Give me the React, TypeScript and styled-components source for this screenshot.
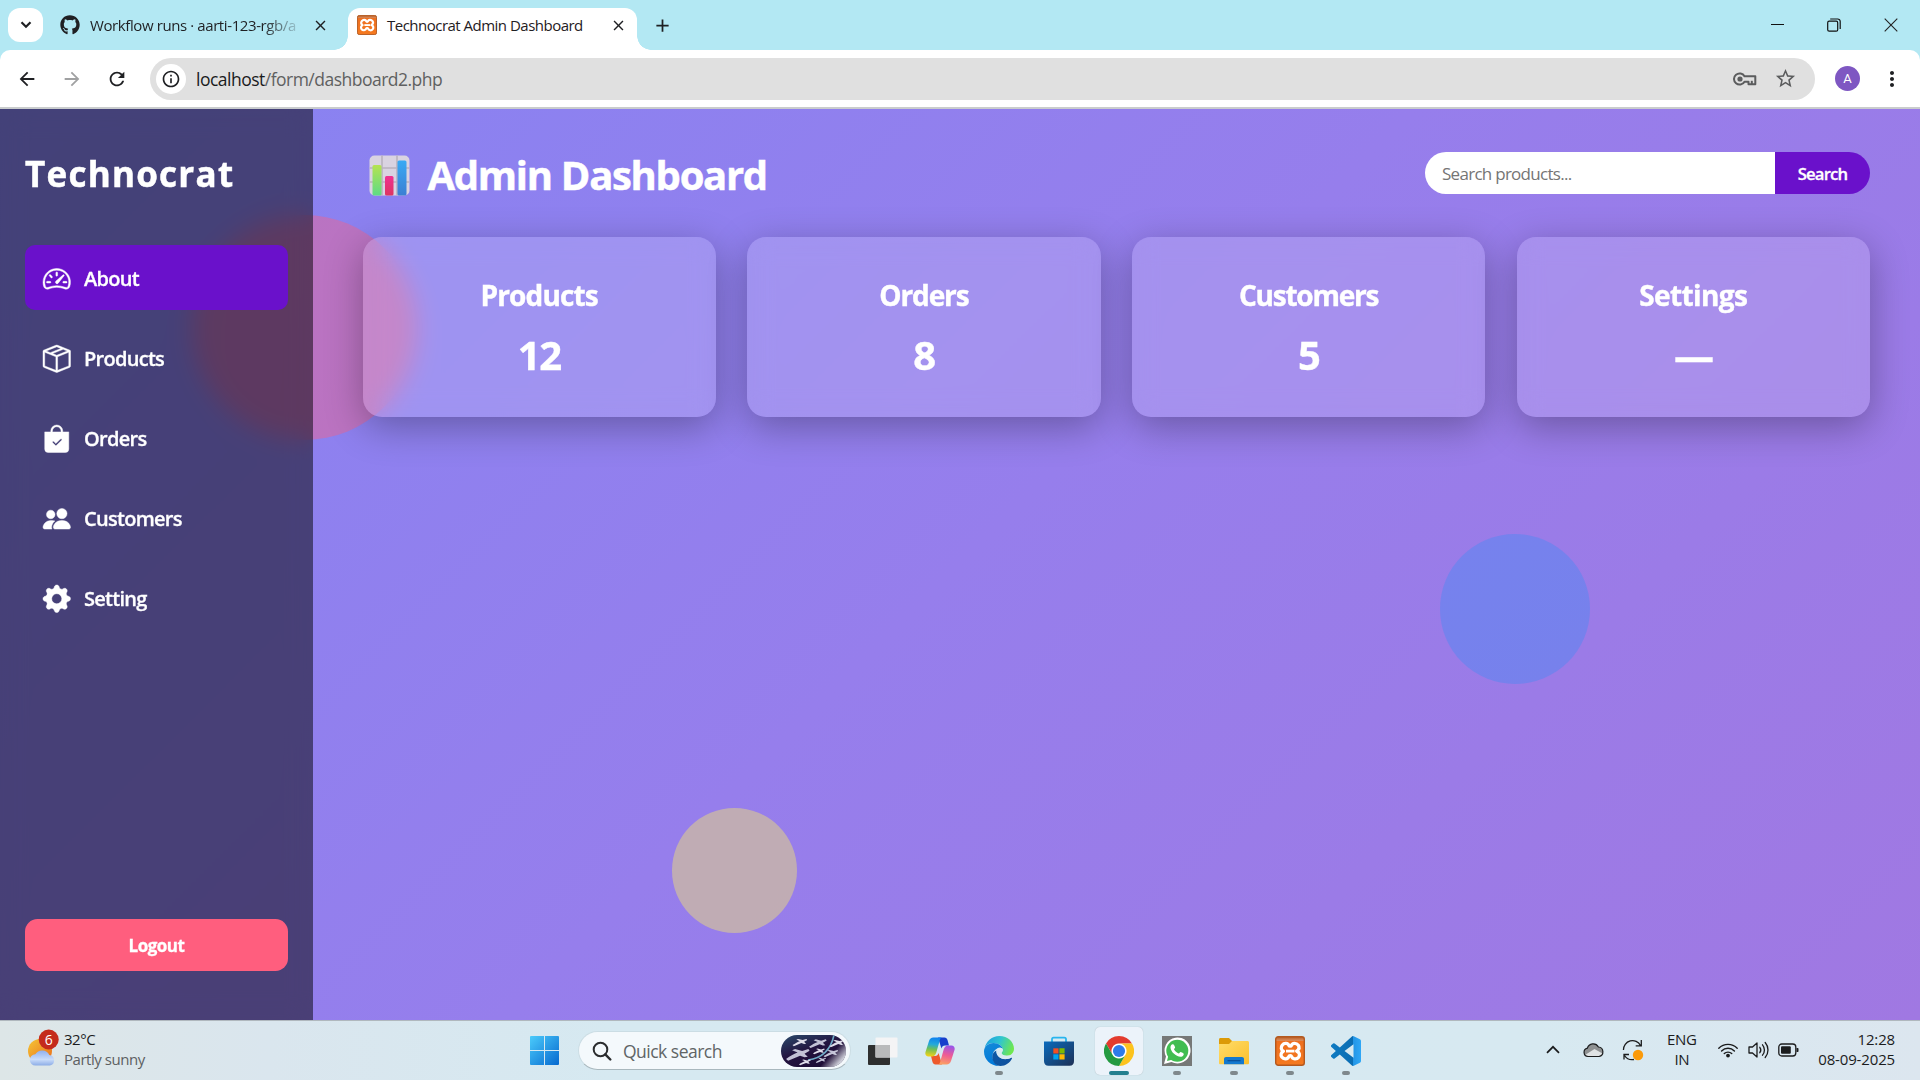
import React from 'react';
import styled, { createGlobalStyle } from 'styled-components';
import { BsSpeedometer2, BsBoxSeam, BsBagCheckFill, BsPeopleFill, BsGearFill } from 'react-icons/bs';
import { FaGithub } from 'react-icons/fa';
import {
  MdArrowBack,
  MdArrowForward,
  MdRefresh,
  MdInfoOutline,
  MdStarOutline,
  MdMoreVert,
  MdClose,
  MdAdd,
} from 'react-icons/md';

const GlobalStyle = createGlobalStyle`
  * { box-sizing: border-box; }
  html, body { margin: 0; padding: 0; overflow: hidden; }
  body { font-family: 'Open Sans', 'Noto Sans', sans-serif; }
  h1, h2, h3, p { margin: 0; }
  svg { display: block; flex-shrink: 0; }
`;

const Screen = styled.div`
  width: 1920px;
  height: 1080px;
  display: flex;
  flex-direction: column;
  overflow: hidden;
`;

/* ---------- Browser chrome ---------- */

const TabStrip = styled.div`
  height: 50px;
  flex-shrink: 0;
  background: #b3e8f3;
  display: flex;
  align-items: flex-end;
  justify-content: space-between;
  padding-left: 8px;
`;

const TabGroup = styled.div`
  display: flex;
  align-items: center;
  height: 42px;
`;

const TabSearch = styled.button`
  width: 35px;
  height: 34px;
  margin-bottom: 8px;
  padding: 0;
  border: 0;
  border-radius: 12px;
  background: #fff;
  color: #1f2023;
  display: flex;
  align-items: center;
  justify-content: center;
`;

const Tab = styled.div<{ $active?: boolean; $width: number }>`
  position: relative;
  width: ${(p) => p.$width}px;
  height: 42px;
  display: flex;
  align-items: center;
  padding: 0 10px 8px 9px;
  border-radius: 12px 12px 0 0;
  background: ${(p) => (p.$active ? '#fff' : 'transparent')};
  color: #1f2023;
  margin-left: ${(p) => (p.$active ? 9 : 8)}px;

  &::before,
  &::after {
    content: '';
    display: ${(p) => (p.$active ? 'block' : 'none')};
    position: absolute;
    bottom: 0;
    width: 14px;
    height: 14px;
  }
  &::before {
    left: -14px;
    background: radial-gradient(circle at 0 0, transparent 13.5px, #fff 14px);
  }
  &::after {
    right: -14px;
    background: radial-gradient(circle at 100% 0, transparent 13.5px, #fff 14px);
  }
`;

const TabTitle = styled.span<{ $fade?: boolean; $spacing: number }>`
  flex: 1;
  margin-left: 10px;
  font-size: 15px;
  letter-spacing: ${(p) => p.$spacing}px;
  line-height: 20px;
  white-space: nowrap;
  mask-image: ${(p) => (p.$fade ? 'linear-gradient(90deg, #000 calc(100% - 38px), transparent calc(100% + 3px))' : 'none')};
`;

const TabClose = styled.span<{ $gap: number }>`
  margin-left: ${(p) => p.$gap}px;
  display: flex;
`;

const NewTab = styled.span`
  margin: 0 0 8px 15px;
  display: flex;
`;

const WindowControls = styled.div`
  height: 50px;
  display: flex;
  align-items: center;
  gap: 43px;
  padding: 0 22px 1px 0;
`;

const ToolbarWrap = styled.div`
  flex-shrink: 0;
  height: 59px;
  background: #b3e8f3;
`;

const Toolbar = styled.div`
  height: 59px;
  background: #fff;
  border-radius: 10px 10px 0 0;
  border-bottom: 2px solid #c9cccd;
  display: flex;
  align-items: center;
  padding: 0 16px 0 16px;
`;

const NavIcons = styled.div`
  display: flex;
  align-items: center;
  gap: 23px;
  width: 134px;
  color: #1f2023;

  svg:nth-child(2) { color: #a0a1a2; }
`;

const AddressBar = styled.div`
  flex: 1;
  height: 42px;
  border-radius: 21px;
  background: #e0e0e0;
  display: flex;
  align-items: center;
  padding: 0 18px 0 6px;
`;

const SiteInfo = styled.span`
  width: 30px;
  height: 30px;
  border-radius: 50%;
  background: #fff;
  display: flex;
  align-items: center;
  justify-content: center;
  color: #1f2023;
`;

const Url = styled.span`
  flex: 1;
  margin-left: 10px;
  font-size: 17.5px;
  letter-spacing: -0.51px;
  line-height: 24px;
  color: #5f6061;

  b { font-weight: 400; color: #1a1b1c; }
`;

const AddressActions = styled.span`
  display: flex;
  align-items: center;
  gap: 17px;
  color: #5b5c5d;
`;

const Avatar = styled.span`
  width: 25px;
  height: 25px;
  margin: 0 20px;
  border-radius: 50%;
  background: #7e57c2;
  color: #fff;
  font: 400 13px/25px Roboto, sans-serif;
  text-align: center;
`;

/* ---------- Page ---------- */

const Page = styled.div`
  position: relative;
  height: 911px;
  flex-shrink: 0;
  display: flex;
  overflow: hidden;
  color: #fff;
  background: linear-gradient(135deg, #8783f2 0%, #967eec 50%, #a078e2 100%);
`;

const Blob = styled.div<{ $size: number; $x: number; $y: number; $color: string }>`
  position: absolute;
  left: ${(p) => p.$x}px;
  top: ${(p) => p.$y}px;
  width: ${(p) => p.$size}px;
  height: ${(p) => p.$size}px;
  border-radius: 50%;
  background: ${(p) => p.$color};
  opacity: 0.4;
`;

const Sidebar = styled.aside`
  position: relative;
  width: 313px;
  flex-shrink: 0;
  padding: 41px 25px 49px;
  display: flex;
  flex-direction: column;
  background: rgba(0, 0, 0, 0.5);
  backdrop-filter: blur(12px);
`;

const Brand = styled.h2`
  height: 48px;
  font-size: 35px;
  line-height: 48px;
  font-weight: 700;
  letter-spacing: 1.25px;
  white-space: nowrap;
  -webkit-text-stroke: 0.5px #fff;
`;

const Nav = styled.nav`
  margin-top: 47px;
  display: flex;
  flex-direction: column;
  gap: 15px;
`;

const NavItem = styled.a<{ $active?: boolean }>`
  height: 65px;
  padding: 2px 18px 0;
  border-radius: 10px;
  display: flex;
  align-items: center;
  gap: 13.5px;
  font-size: 20px;
  font-weight: 600;
  letter-spacing: -0.72px;
  -webkit-text-stroke: 0.3px #fff;
  background: ${(p) => (p.$active ? '#6a11cb' : 'transparent')};

  svg { overflow: visible; stroke: #fff; stroke-width: 0.25px; }
`;

const Logout = styled.button`
  margin-top: auto;
  height: 52px;
  border: 0;
  padding: 1px 0 0;
  border-radius: 12.5px;
  background: #ff5e7e;
  color: #fff;
  font: 700 17px/51px 'Open Sans', sans-serif;
  letter-spacing: -0.5px;
  -webkit-text-stroke: 0.3px #fff;
`;

const Main = styled.main`
  position: relative;
  flex: 1;
  padding: 0 50px 0 49.5px;
`;

const Header = styled.header`
  height: 128px;
  display: flex;
  align-items: center;
  justify-content: space-between;
`;

const Title = styled.h1`
  display: flex;
  align-items: center;
  gap: 17.5px;
  padding: 4px 0 0 6.5px;
  font-size: 40px;
  line-height: 54px;
  font-weight: 700;
  letter-spacing: -1.29px;
  -webkit-text-stroke: 0.5px #fff;
`;

const SearchForm = styled.form`
  width: 445px;
  height: 42px;
  display: flex;
  border-radius: 21px;
  overflow: hidden;
`;

const SearchInput = styled.input`
  flex: 1;
  min-width: 0;
  border: 0;
  padding: 0 17px;
  background: #fff;
  font: 400 17px 'Open Sans', sans-serif;
  letter-spacing: -0.72px;

  &::placeholder { color: #757575; opacity: 1; }
`;

const SearchButton = styled.button`
  width: 95px;
  border: 0;
  padding: 0;
  background: #6a11cb;
  color: #fff;
  font: 600 16.7px 'Open Sans', sans-serif;
  letter-spacing: -0.85px;
  -webkit-text-stroke: 0.3px #fff;
`;

const Cards = styled.section`
  display: grid;
  grid-template-columns: repeat(4, 1fr);
  gap: 31.25px;
`;

const Card = styled.article`
  height: 180px;
  padding-top: 38px;
  border-radius: 19px;
  text-align: center;
  background: rgba(255, 255, 255, 0.15);
  box-shadow: 0 10px 38px rgba(0, 0, 0, 0.3);
  backdrop-filter: blur(12px);
`;

const CardTitle = styled.h3<{ $spacing: number }>`
  font-size: 28px;
  line-height: 40px;
  font-weight: 700;
  letter-spacing: ${(p) => p.$spacing}px;
  -webkit-text-stroke: 0.4px #fff;
`;

const CardValue = styled.p`
  margin-top: 10px;
  font-size: 40px;
  line-height: 60px;
  font-weight: 700;
  letter-spacing: -1.5px;
  -webkit-text-stroke: 0.4px #fff;
`;

/* ---------- Taskbar ---------- */

const Taskbar = styled.footer`
  height: 60px;
  flex-shrink: 0;
  border-top: 1px solid #b0b8be;
  background: linear-gradient(90deg, #dde6e7 0%, #dae6ee 14%, #d6e9f1 32%, #d7e9f1 80%, #dce6ef 100%);
  display: grid;
  grid-template-columns: 521px 1fr 394px;
  color: #1b1c1d;
  font-size: 15px;
  line-height: 20px;
`;

const Weather = styled.div`
  display: flex;
  align-items: center;
  gap: 4px;
  padding: 0 0 2px 27px;
`;

const WeatherText = styled.div`
  display: flex;
  flex-direction: column;
  letter-spacing: -0.46px;
  padding-bottom: 2px;

  span:last-child { color: #5c6062; }
`;

const Apps = styled.div`
  display: grid;
  grid-template-columns: 47px 286px 57px 58px 59px 62px 58px 58px 56px 56px 55px;
  height: 59px;
`;

const AppCell = styled.div<{ $active?: boolean }>`
  height: 59px;
  display: flex;
  flex-direction: column;
  align-items: center;
  justify-content: center;

  > span {
    width: 48px;
    height: 48px;
    padding-top: 9px;
    border-radius: 5px;
    display: flex;
    flex-direction: column;
    align-items: center;
    justify-content: space-between;
    background: ${(p) => (p.$active ? '#ecf3fa' : 'transparent')};
    box-shadow: ${(p) => (p.$active ? '0 0 1px rgba(0,0,0,.25)' : 'none')};
  }
`;

const IconLift = styled.div`
  height: 59px;
  padding: 15px 0 0 9px;
`;

const Indicator = styled.i<{ $active?: boolean; $hidden?: boolean }>`
  display: block;
  width: ${(p) => (p.$active ? 20 : 8)}px;
  height: 4px;
  border-radius: 2px;
  background: ${(p) => (p.$hidden ? 'transparent' : p.$active ? '#24808f' : '#7f888c')};
`;

const QuickSearch = styled.div`
  align-self: start;
  width: 273px;
  height: 39px;
  margin: 10px 0 0 10px;
  padding: 0 3px 0 13px;
  border-radius: 20px;
  border: 1px solid #cbdde4;
  border-bottom-color: #a9b8be;
  background: #f4f9fc;
  display: flex;
  align-items: center;

  > span {
    flex: 1;
    margin: 0 0 0 11px;
    font-size: 17.5px;
    letter-spacing: -0.51px;
    color: #606566;
  }
`;

const Tray = styled.div`
  display: grid;
  grid-template-columns: 37px 39px 45px 51px 30px 30px 1fr;
  grid-template-columns: 37px 39px 45px 51px 30px 30px 30px 1fr;
  align-items: center;
  justify-items: start;
  padding: 0 0 2px 20px;
`;

const TrayText = styled.div<{ $end?: boolean }>`
  justify-self: ${(p) => (p.$end ? 'end' : 'start')};
  margin: ${(p) => (p.$end ? '0 25px 2px 0' : '0 0 2px 0')};
  text-align: ${(p) => (p.$end ? 'right' : 'center')};
  display: flex;
  flex-direction: column;
  letter-spacing: ${(p) => (p.$end ? -0.15 : -0.3)}px;
`;

/* ---------- Drawings ---------- */

const XamppIcon = ({ size }: { size: number }) => (
  <svg width={size} height={size} viewBox="0 0 30 30">
    <defs>
      <linearGradient id="xa" x1="0" y1="0" x2="0" y2="1">
        <stop offset="0" stopColor="#b75a22" />
        <stop offset=".13" stopColor="#d98b5a" />
        <stop offset=".16" stopColor="#ee6f1f" />
        <stop offset="1" stopColor="#f57a20" />
      </linearGradient>
    </defs>
    <rect x=".7" y=".7" width="28.6" height="28.6" rx="2.5" fill="url(#xa)" stroke="#b4591f" strokeWidth="1.4" />
    <path
      d="M7.200 9.200C9.200 6.600 13 7 14 9.600c.3.800 2 .8 2.300 0 1-2.800 5-3 7-.3 1.500 2.200.5 4.300-1.700 5.800 3 1.200 3.600 4 2 6.200-2 2.600-6 2-7-.8-.4-1-2.400-1-2.800.1-1 2.600-5 3.200-7 .5-1.500-2.100-.8-4.700 1.600-5.900-2.500-1.400-2.700-4-1.200-6z"
      fill="none"
      stroke="#fff"
      strokeWidth="3.300"
      strokeLinejoin="round"
    />
    <path d="M11 15.100h8.500" stroke="#fff" strokeWidth="2.800" />
  </svg>
);

const KeyIcon = () => (
  <svg width="24" height="16" viewBox="0 0 24 16" fill="none" stroke="currentColor" strokeWidth="2">
    <path d="M11.500 5.300A5.600 5.600 0 1 0 11.500 10.700H15.500V13.300H22.300V5.300Z" strokeLinejoin="round" />
    <circle cx="7" cy="8" r="2.600" fill="currentColor" stroke="none" />
    <path d="M18.800 13v-3.200" />
  </svg>
);

const ChartEmoji = () => (
  <svg width="41" height="41" viewBox="0 0 41 41">
    <defs>
      <linearGradient id="cg" x1="0" y1="0" x2="0" y2="1"><stop offset="0" stopColor="#b5e351" /><stop offset="1" stopColor="#5edb86" /></linearGradient>
      <linearGradient id="cb" x1="0" y1="0" x2="0" y2="1"><stop offset="0" stopColor="#38aaf4" /><stop offset="1" stopColor="#3b7fd3" /></linearGradient>
      <linearGradient id="cr" x1="0" y1="0" x2="0" y2="1"><stop offset="0" stopColor="#ef3192" /><stop offset="1" stopColor="#dc3661" /></linearGradient>
    </defs>
    <rect x=".5" y=".5" width="40" height="40" rx="5" fill="#d9d3e1" />
    <path d="M13 .5v40M28 .5v40M.5 13h40M.5 27h40" stroke="#b9b2bf" strokeWidth="1.600" />
    <rect x="3.500" y="10" width="9" height="30.500" rx="1.500" fill="url(#cg)" />
    <rect x="16" y="21" width="8.500" height="19.500" rx="1.500" fill="url(#cr)" />
    <rect x="28.500" y="5.500" width="9" height="35" rx="1.500" fill="url(#cb)" />
  </svg>
);

const WeatherIcon = () => (
  <svg width="33" height="42" viewBox="0 0 33 42">
    <defs>
      <linearGradient id="sun" x1="0" y1="0" x2="1" y2="1"><stop offset="0" stopColor="#f5c636" /><stop offset="1" stopColor="#ea6a1a" /></linearGradient>
      <linearGradient id="cld" x1="0" y1="0" x2="0" y2="1"><stop offset="0" stopColor="#8fb0ee" /><stop offset=".6" stopColor="#c9dcfa" /><stop offset="1" stopColor="#8dade6" /></linearGradient>
    </defs>
    <circle cx="13" cy="22" r="12" fill="url(#sun)" />
    <path d="M8.500 36.500a5.600 5.600 0 0 1-.2-11.200 8 8 0 0 1 14 .6A5.400 5.400 0 0 1 23 36.500Z" fill="url(#cld)" />
    <circle cx="21.700" cy="10.500" r="10" fill="#c42b1c" />
    <text x="21.700" y="15.500" textAnchor="middle" fontFamily="Open Sans, sans-serif" fontSize="14" fill="#fff">6</text>
  </svg>
);

const StartIcon = () => (
  <svg width="29" height="29" viewBox="0 0 29 29">
    <defs>
      <linearGradient id="win" x1="0" y1="0" x2="1" y2="1"><stop offset="0" stopColor="#4bcbfb" /><stop offset="1" stopColor="#0669cf" /></linearGradient>
    </defs>
    <path d="M1 0h13v14H0V1a1 1 0 0 1 1-1zM15 0h13a1 1 0 0 1 1 1v13H15zM0 15h14v14H1a1 1 0 0 1-1-1zM15 15h14v13a1 1 0 0 1-1 1H15z" fill="url(#win)" />
  </svg>
);

const MagnifierIcon = () => (
  <svg width="20" height="20" viewBox="0 0 20 20" fill="none" stroke="#2b2d2f" strokeWidth="2">
    <circle cx="8.500" cy="8.500" r="6.800" />
    <path d="M13.300 13.300l5 5.200" strokeWidth="2.400" strokeLinecap="round" />
  </svg>
);

const planes: [number, number, number][] = [
  [19, 7, 1], [37, 8, 1.2], [56, 8, 1], [17, 19, 1.6], [38, 16, 0.8], [50, 18, 1], [24, 27, 0.8], [40, 25, 0.7],
];

const SearchArt = () => (
  <svg width="66" height="32" viewBox="0 0 66 32">
    <defs>
      <linearGradient id="sky" x1="0" y1="0" x2=".7" y2="1"><stop offset="0" stopColor="#2a4a6b" /><stop offset=".5" stopColor="#231440" /><stop offset="1" stopColor="#1d0b33" /></linearGradient>
      <linearGradient id="fade" gradientUnits="userSpaceOnUse" x1="50" y1="19" x2="61" y2="29"><stop offset="0" stopColor="#f4f9fc" stopOpacity="0" /><stop offset="1" stopColor="#f4f9fc" /></linearGradient>
      <clipPath id="pill"><rect width="65" height="32" rx="16" /></clipPath>
    </defs>
    <g clipPath="url(#pill)">
      <rect width="66" height="32" fill="url(#sky)" />
      <path d="M53 0C50 14 42 23 27 25" fill="none" stroke="#6ea9c6" strokeWidth="1.600" />
      {planes.map(([x, y, s], i) => (
        <path
          key={i}
          transform={`translate(${x} ${y}) rotate(-14) scale(${s})`}
          d="M-8 1.200C-5 0-2-.8 0-.9L-3-3.200-1-3.400 3-1.200 7-1.400 7.500-.2 4 .8 5.500 3.200 3.500 3 1 1.400-7 2.600z"
          fill={i % 2 ? '#c3c2d6' : '#dedce9'}
        />
      ))}
      <rect width="66" height="32" fill="url(#fade)" />
    </g>
  </svg>
);

const TaskViewIcon = () => (
  <svg width="30" height="30" viewBox="0 0 30 30">
    <rect x="0" y="9" width="22" height="20" rx="1" fill="#2e2f2f" />
    <rect x="7.500" y="1.500" width="22" height="20" rx="1" fill="#f4f4f5" />
    <rect x="7.500" y="9" width="14.500" height="12.500" fill="#b9babb" />
  </svg>
);

const CopilotIcon = () => (
  <svg width="30" height="30" viewBox="0 0 30 30">
    <defs>
      <linearGradient id="cpa" x1=".4" y1="0" x2=".3" y2="1"><stop offset="0" stopColor="#0e83ef" /><stop offset=".35" stopColor="#25a9d9" /><stop offset=".6" stopColor="#6dbf5a" /><stop offset="1" stopColor="#f5d316" /></linearGradient>
      <linearGradient id="cpb" x1=".6" y1="0" x2=".4" y2="1"><stop offset="0" stopColor="#9a55e8" /><stop offset=".5" stopColor="#ee5c95" /><stop offset="1" stopColor="#fba064" /></linearGradient>
    </defs>
    <path d="M13 1.500h6.500c1.600 0 2.500 1 3 2.500l1.500 5.500h-4c-2 0-3 1-3.600 3z" fill="#173fcc" />
    <path d="M17 28.500h-6.500c-1.600 0-2.500-1-3-2.500L6 20h4c2 0 3-1 3.600-3z" fill="#ee5a2c" />
    <path d="M8.500 1.500h8.300c-1.600.5-1.800 2-2.500 4.500l-3 10.500c-.8 2.800-2.300 4-4.300 4H3.500C1 20.500-.2 18.500.5 16L4 5c.8-2.300 2-3.500 4.500-3.500z" fill="url(#cpa)" />
    <path d="M21.500 28.500h-8.300c1.600-.5 1.800-2 2.500-4.500l3-10.500c.8-2.800 2.300-4 4.300-4h3.500c2.500 0 3.700 2 3 4.500L26 25c-.8 2.300-2 3.500-4.500 3.500z" fill="url(#cpb)" />
  </svg>
);

const EdgeIcon = () => (
  <svg width="30" height="30" viewBox="0 0 30 30">
    <defs>
      <linearGradient id="ea" x1="0" y1=".2" x2="1" y2=".5"><stop offset="0" stopColor="#1b9de2" /><stop offset=".5" stopColor="#30c5cf" /><stop offset="1" stopColor="#6fe84e" /></linearGradient>
      <linearGradient id="eb" x1="0" y1="0" x2=".4" y2="1"><stop offset="0" stopColor="#168bd8" /><stop offset="1" stopColor="#0078d9" /></linearGradient>
      <linearGradient id="ec" x1="0" y1="0" x2="1" y2="1"><stop offset="0" stopColor="#0b5aa8" /><stop offset="1" stopColor="#104f9c" /></linearGradient>
    </defs>
    <path d="M.6 12.500C2 5 8 0 15.300 0 24 0 30 6 30 12.800c0 4.200-3.200 7-7.200 7-3.500 0-5.300-1.500-5.300-2.600 0-.8 1.300-1.200 1.300-3.400 0-3-3.300-6.800-9.300-6.800C5 7 2 9.200.6 12.500z" fill="url(#ea)" />
    <path d="M18.800 13.500C18.500 10 14.800 7 9.500 7 4 7 0 11 0 15.500 0 23.500 6.500 30 15 30c-3-1-6.500-5-6.500-9.500 0-4 2-7 5.500-8.500 2-.8 4.200-.3 4.800 1.500z" fill="url(#eb)" />
    <path d="M12.500 14.500c-2.700 1.300-4.200 3.300-4.200 6.500C8.300 26 12 30 16.500 30c5 0 9.500-3.200 11.500-7.500.3-.7-.3-1-.9-.7-7.600 3.700-15.100-.3-14.600-7.300z" fill="url(#ec)" />
    <path d="M27.500 21.600c-7.500 3.700-15.500.2-15.200-6.800.2-1.700 1.500-3 3.300-3.100 2.200-.2 3.400 1 3.200 2.400-.1 1.500-1.300 2-1.300 3 0 1.300 1.800 2.700 5.300 2.700 2 0 3.500-.6 4.700 1.800z" fill="#d9eaf1" />
  </svg>
);

const StoreIcon = () => (
  <svg width="30" height="30" viewBox="0 0 30 30">
    <defs>
      <linearGradient id="st" x1="0" y1="0" x2="1" y2="1"><stop offset="0" stopColor="#0a6bbd" /><stop offset="1" stopColor="#1e3055" /></linearGradient>
    </defs>
    <path d="M8 6V3.200C8 2.300 8.700 1.600 9.600 1.600h10.800c.9 0 1.600.7 1.600 1.600V6" fill="none" stroke="#28b5ee" strokeWidth="1.800" />
    <path d="M0 5.500h30V25c0 3-1.500 4.700-4.500 4.700h-21C1.500 29.700 0 28 0 25z" fill="url(#st)" />
    <path d="M9.300 12.300h5.200v5.200H9.300z" fill="#f25022" />
    <path d="M15.400 12.300h5.200v5.200h-5.200z" fill="#7fba00" />
    <path d="M9.300 18.300h5.200v5.200H9.300z" fill="#00a4ef" />
    <path d="M15.400 18.300h5.200v5.200h-5.200z" fill="#ffb900" />
  </svg>
);

const ChromeIcon = () => (
  <svg width="30" height="30" viewBox="0 0 48 48">
    <circle cx="24" cy="24" r="13" fill="#fff" />
    <path d="M24 12h20.781a23.994 23.994 0 0 0-41.564.003L13.608 30l.009-.002A11.985 11.985 0 0 1 24 12z" fill="#e33b2e" />
    <path d="M34.391 30.003L24.001 48A23.994 23.994 0 0 0 44.780 12.003H23.999l-.003.009a11.985 11.985 0 0 1 10.395 17.991z" fill="#fcc31e" />
    <path d="M13.609 30.003L3.218 12.006A23.994 23.994 0 0 0 24.003 48l10.390-17.997-.007-.007a11.985 11.985 0 0 1-20.777.007z" fill="#249a41" />
    <circle cx="24" cy="24" r="9.700" fill="#2f7bea" />
  </svg>
);

const WhatsappIcon = () => (
  <svg width="30" height="30" viewBox="0 0 30 30">
    <rect width="30" height="30" fill="#767877" />
    <path d="M2 28l2-7.500A13 13 0 1 1 9.500 26z" fill="#fff" />
    <circle cx="15.300" cy="14.700" r="11" fill="#41bd51" />
    <path d="M5 25l1.500-6 4.500 4.600z" fill="#41bd51" />
    <path d="M11.500 8.500c-.8-.6-1.800-.2-2.400.7-1.600 2.500.3 6 2.700 8.300 2.500 2.400 6.300 4.200 8.700 2.700 1.200-.8 1.500-2.200 1-2.700-.6-.6-2.200-1.400-3-1.500-.7 0-1.100 1.500-1.900 1.400-1.600-.4-4-2.600-4.600-4.100-.1-.8 1.200-1.200 1.100-1.900-.1-.7-.8-2.300-1.600-2.900z" fill="#fff" />
  </svg>
);

const ExplorerIcon = () => (
  <svg width="30" height="30" viewBox="0 0 30 30">
    <defs>
      <linearGradient id="fo" x1="0" y1="0" x2="1" y2="1"><stop offset="0" stopColor="#ffdc6a" /><stop offset="1" stopColor="#fbc02c" /></linearGradient>
    </defs>
    <path d="M0 3.500C0 2.600.6 2 1.500 2H10l3 3v6H0z" fill="#dc9a07" />
    <path d="M0 8h10l3-3h15.500c.9 0 1.500.6 1.500 1.500V27c0 .8-.5 1.300-1.300 1.300H1.300C.5 28.300 0 27.800 0 27z" fill="url(#fo)" />
    <path d="M5 28.300V23c0-1.200.8-2 2-2h16c1.200 0 2 .8 2 2v5.300z" fill="#1379cf" />
    <path d="M8.500 24.700h13" stroke="#0a4f97" strokeWidth="1.200" />
  </svg>
);

const CodeIcon = () => (
  <svg width="30" height="30" viewBox="0 0 24 24">
    <defs>
      <linearGradient id="vs"><stop offset="0" stopColor="#0f7bc2" /><stop offset=".74" stopColor="#0a6cb2" /><stop offset=".75" stopColor="#2496e6" /><stop offset="1" stopColor="#2fa7f6" /></linearGradient>
    </defs>
    <path fill="url(#vs)" d="M23.150 2.587L18.210.210a1.494 1.494 0 0 0-1.705.290l-9.460 8.630-4.120-3.128a.999.999 0 0 0-1.276.057L.327 7.261A1 1 0 0 0 .326 8.740L3.899 12 .326 15.260a1 1 0 0 0 .001 1.479L1.650 17.940a.999.999 0 0 0 1.276.057l4.120-3.128 9.460 8.630a1.492 1.492 0 0 0 1.704.290l4.942-2.377A1.500 1.500 0 0 0 24 20.060V3.939a1.500 1.500 0 0 0-.850-1.352zm-5.146 14.861L10.826 12l7.178-5.448v10.896z" />
  </svg>
);

const CloudIcon = () => (
  <svg width="21" height="16" viewBox="0 0 21 16">
    <path d="M5 14.500a4.200 4.200 0 0 1-.6-8.300 6 6 0 0 1 11-1.200A4.800 4.800 0 0 1 16 14.500z" fill="#8f9192" />
    <path d="M2 13l9.500-6 8 4.500c-.3 2-1.800 3-3.500 3H5c-1.300 0-2.300-.5-3-1.500z" fill="#e0e3e4" />
    <path d="M5 14.500a4.200 4.200 0 0 1-.6-8.300 6 6 0 0 1 11-1.200A4.800 4.800 0 0 1 16 14.500z" fill="none" stroke="#1b1c1d" strokeWidth="1.200" />
  </svg>
);

const SyncIcon = () => (
  <svg width="22" height="22" viewBox="0 0 22 22" fill="none" stroke="#1b1c1d" strokeWidth="1.300">
    <path d="M1.500 11a9 9 0 0 1 17-4.500M19.300 1v5.800h-5.600M2 20.500v-5h5M2.500 16.500a9.300 9.300 0 0 0 9.500 4" />
    <circle cx="16" cy="16" r="5.200" fill="#fb9a0a" stroke="none" />
  </svg>
);

const WifiIcon = () => (
  <svg width="20" height="16" viewBox="0 0 20 16" fill="none" stroke="#1b1c1d" strokeWidth="1.400" strokeLinecap="round">
    <path d="M.8 6.200a13 13 0 0 1 18.400 0M3.600 8.900a9 9 0 0 1 12.800 0M6.300 11.600a5.300 5.300 0 0 1 7.400 0" />
    <circle cx="10" cy="13.600" r="1.900" fill="#1b1c1d" stroke="none" />
  </svg>
);

const SpeakerIcon = () => (
  <svg width="21" height="18" viewBox="0 0 21 18" fill="none" stroke="#1b1c1d" strokeWidth="1.300" strokeLinejoin="round" strokeLinecap="round">
    <path d="M1 6h3.500L9 2v14l-4.500-4H1z" />
    <path d="M11.800 6.300a4.500 4.500 0 0 1 0 5.400M14.500 3.800a8 8 0 0 1 0 10.400M17.200 1.500a11.500 11.500 0 0 1 0 15" />
  </svg>
);

const BatteryIcon = () => (
  <svg width="21" height="14" viewBox="0 0 21 14">
    <rect x=".8" y="1" width="17" height="12" rx="3" fill="none" stroke="#1b1c1d" strokeWidth="1.300" />
    <rect x="3" y="3.200" width="9.800" height="7.600" rx="1" fill="#1b1c1d" />
    <path d="M18.500 5h1.200c.6 0 .8.300.8.800v2.400c0 .5-.2.800-.8.800h-1.200z" fill="#1b1c1d" />
  </svg>
);

const navItems = [
  { label: 'About', Icon: BsSpeedometer2 },
  { label: 'Products', Icon: BsBoxSeam },
  { label: 'Orders', Icon: BsBagCheckFill },
  { label: 'Customers', Icon: BsPeopleFill },
  { label: 'Setting', Icon: BsGearFill },
];

const cards = [
  { title: 'Products', value: '12', spacing: -0.86 },
  { title: 'Orders', value: '8', spacing: -1.1 },
  { title: 'Customers', value: '5', spacing: -1.23 },
  { title: 'Settings', value: '—', spacing: -0.6 },
];

const apps = [
  { name: 'task-view', Icon: TaskViewIcon, open: false },
  { name: 'copilot', Icon: CopilotIcon, open: false },
  { name: 'edge', Icon: EdgeIcon, open: true },
  { name: 'store', Icon: StoreIcon, open: false },
  { name: 'chrome', Icon: ChromeIcon, open: true },
  { name: 'whatsapp', Icon: WhatsappIcon, open: true },
  { name: 'explorer', Icon: ExplorerIcon, open: true },
  { name: 'xampp', Icon: () => <XamppIcon size={30} />, open: true },
  { name: 'code', Icon: CodeIcon, open: true },
];

const Browser = () => (
  <>
    <TabStrip>
      <TabGroup>
        <TabSearch>
          <svg width="12" height="8" viewBox="0 0 12 8" fill="none" stroke="currentColor" strokeWidth="2.200">
            <path d="M1.500 1.300L6 5.800l4.500-4.500" />
          </svg>
        </TabSearch>
        <Tab $width={288}>
          <FaGithub size={20} />
          <TabTitle $fade $spacing={-0.4}>Workflow runs · aarti-123-rgb/a</TabTitle>
          <TabClose $gap={11}><MdClose size={17} /></TabClose>
        </Tab>
        <Tab $active $width={289}>
          <XamppIcon size={20} />
          <TabTitle $spacing={-0.51}>Technocrat Admin Dashboard</TabTitle>
          <TabClose $gap={8}><MdClose size={17} /></TabClose>
        </Tab>
        <NewTab><MdAdd size={21} color="#1f2023" /></NewTab>
      </TabGroup>
      <WindowControls>
        <svg width="13" height="13" viewBox="0 0 13 13"><path d="M0 6h13" stroke="#111" strokeWidth="1" shapeRendering="crispEdges" /></svg>
        <svg width="14" height="14" viewBox="0 0 14 14" fill="none" stroke="#111" strokeWidth="1.200">
          <rect x=".7" y="3.200" width="10" height="10" rx="1.500" />
          <path d="M3.200 1h7.500a2.500 2.500 0 0 1 2.500 2.500v7.500" />
        </svg>
        <svg width="14" height="14" viewBox="0 0 14 14"><path d="M.7.7l12.600 12.600M13.300.7L.7 13.300" stroke="#222" strokeWidth="1.100" /></svg>
      </WindowControls>
    </TabStrip>
    <ToolbarWrap>
      <Toolbar>
        <NavIcons>
          <MdArrowBack size={22} />
          <MdArrowForward size={22} />
          <MdRefresh size={22} />
        </NavIcons>
        <AddressBar>
          <SiteInfo><MdInfoOutline size={20} /></SiteInfo>
          <Url><b>localhost</b>/form/dashboard2.php</Url>
          <AddressActions>
            <KeyIcon />
            <MdStarOutline size={23} />
          </AddressActions>
        </AddressBar>
        <Avatar>A</Avatar>
        <MdMoreVert size={24} color="#1f2023" />
      </Toolbar>
    </ToolbarWrap>
  </>
);

export default function App() {
  return (
    <Screen>
      <GlobalStyle />
      <Browser />
      <Page>
        <Blob $size={225} $x={192} $y={106} $color="#ff5e7e" />
        <Blob $size={150} $x={1440} $y={425} $color="#428bf5" />
        <Blob $size={125} $x={672} $y={699} $color="#fef262" />
        <Sidebar>
          <Brand>Technocrat</Brand>
          <Nav>
            {navItems.map(({ label, Icon }, i) => (
              <NavItem key={label} $active={i === 0}>
                <Icon size={27.5} />
                {label}
              </NavItem>
            ))}
          </Nav>
          <Logout>Logout</Logout>
        </Sidebar>
        <Main>
          <Header>
            <Title><ChartEmoji />Admin Dashboard</Title>
            <SearchForm>
              <SearchInput placeholder="Search products..." />
              <SearchButton type="button">Search</SearchButton>
            </SearchForm>
          </Header>
          <Cards>
            {cards.map((c) => (
              <Card key={c.title}>
                <CardTitle $spacing={c.spacing}>{c.title}</CardTitle>
                <CardValue>{c.value}</CardValue>
              </Card>
            ))}
          </Cards>
        </Main>
      </Page>
      <Taskbar>
        <Weather>
          <WeatherIcon />
          <WeatherText><span>32°C</span><span>Partly sunny</span></WeatherText>
        </Weather>
        <Apps>
          <IconLift><StartIcon /></IconLift>
          <QuickSearch>
            <MagnifierIcon />
            <span>Quick search</span>
            <SearchArt />
          </QuickSearch>
          {apps.map(({ name, Icon, open }) => (
            <AppCell key={name} $active={name === 'chrome'}>
              <span>
                <Icon />
                <Indicator $active={name === 'chrome'} $hidden={!open} />
              </span>
            </AppCell>
          ))}
        </Apps>
        <Tray>
          <svg width="14" height="9" viewBox="0 0 14 9" fill="none" stroke="#1b1c1d" strokeWidth="1.700"><path d="M1 7.800l6-6 6 6" /></svg>
          <CloudIcon />
          <SyncIcon />
          <TrayText><span>ENG</span><span>IN</span></TrayText>
          <WifiIcon />
          <SpeakerIcon />
          <BatteryIcon />
          <TrayText $end><span>12:28</span><span>08-09-2025</span></TrayText>
        </Tray>
      </Taskbar>
    </Screen>
  );
}
